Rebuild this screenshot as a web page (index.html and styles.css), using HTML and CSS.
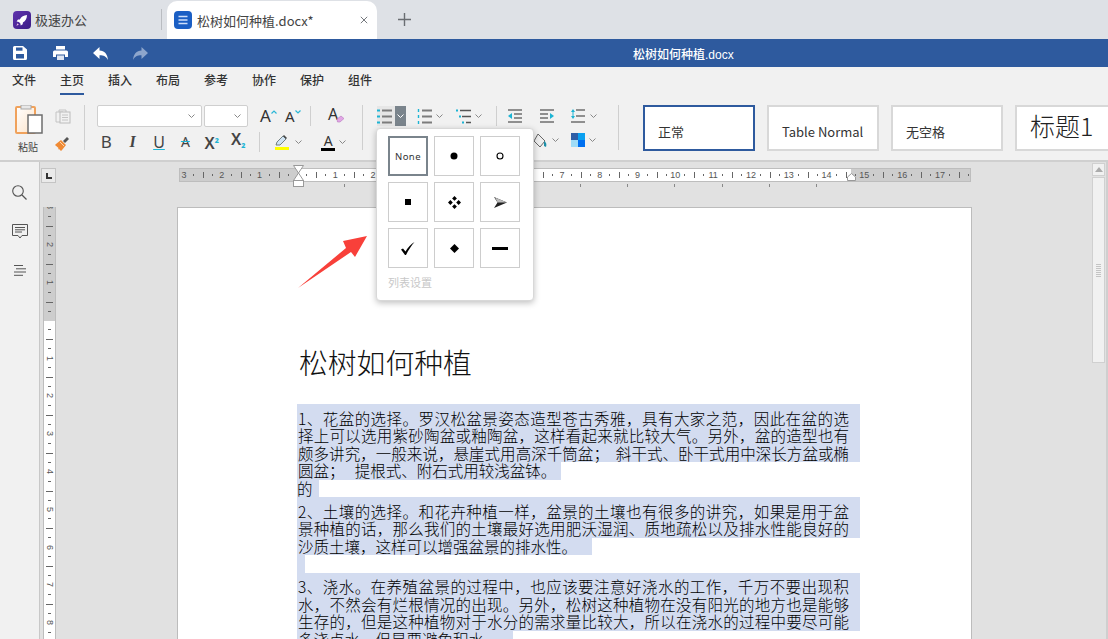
FILE: index.html
```html
<!DOCTYPE html>
<html lang="zh">
<head>
<meta charset="utf-8">
<title>松树如何种植.docx</title>
<link rel="stylesheet" href="styles.css">
</head>
<body>

<div class="tabs">
    <div class="tab">
        <svg class="tab-icon" viewBox="0 0 18 18"><defs><linearGradient id="pg" x1="0" y1="0" x2="1" y2="1"><stop offset="0" stop-color="#5f32ad"/><stop offset="1" stop-color="#3a1c86"/></linearGradient></defs><rect width="18" height="18" rx="4" fill="url(#pg)"/><path d="M14 4c-3.4.2-5.6 1.6-7.2 4.4L5 8.6 3.6 10.6l2.3.3 1.5 1.500.3 2.200 2-1.400.2-1.800C12.600 10 13.900 7.600 14 4z" fill="#fff"/><path d="M4.500 12.300 3.400 14.800 5.800 13.700z" fill="#f4c2e8"/></svg>
        <span>极速办公</span>
    </div>
    <div class="tab-sep"></div>
    <div class="tab active">
        <svg class="tab-icon" viewBox="0 0 18 18"><rect width="18" height="18" rx="4" fill="#1b5fc4"/><path d="M4.500 5.500h9M4.500 9h9M4.500 12.500h9" stroke="#cfe0fa" stroke-width="1.300"/></svg>
        <span class="tab-name">松树如何种植.docx*</span>
        <svg class="tab-close" viewBox="0 0 10 10"><path d="M1 1l8 8M9 1l-8 8" stroke="#6f7378" stroke-width="1.200"/></svg>
    </div>
    <svg class="tab-add" viewBox="0 0 13 13"><path d="M6.500 0v13M0 6.500h13" stroke="#6a6d72" stroke-width="1.400"/></svg>
</div>

<div class="titlebar">
    <div class="qa"><svg viewBox="0 0 14 14" width="14" height="14"><path d="M1.500 0H10l4 3.500v9a1.500 1.500 0 0 1-1.500 1.500h-11A1.500 1.500 0 0 1 0 12.500v-11A1.500 1.500 0 0 1 1.500 0z" fill="#fff"/><rect x="3" y="1.500" width="6.500" height="3.200" fill="#2e5a9e"/><rect x="3" y="8" width="8" height="4.500" fill="#2e5a9e"/></svg></div>
    <div class="qa"><svg viewBox="0 0 15 14" width="15" height="14"><rect x="3" y="0" width="9" height="3.500" fill="#fff"/><path d="M1.500 4.500h12A1.500 1.500 0 0 1 15 6v5h-3V8.500H3V11H0V6a1.500 1.500 0 0 1 1.500-1.500z" fill="#fff"/><rect x="4" y="9.500" width="7" height="4.500" fill="#dfe6f2"/></svg></div>
    <div class="qa"><svg viewBox="0 0 15 13" width="15" height="13"><path d="M6.500 0v3.500C11.500 3.800 14.500 7 15 13c-1.800-3.400-4.200-4.800-8.500-4.800V12L0 6z" fill="#fff"/></svg></div>
    <div class="qa"><svg viewBox="0 0 15 13" width="15" height="13"><path d="M8.500 0v3.500C3.500 3.800.5 7 0 13c1.800-3.400 4.200-4.800 8.500-4.800V12L15 6z" fill="#8ea6cc"/></svg></div>
    <div class="doc-title">松树如何种植.docx</div>
</div>

<div class="menu">
    <span>文件</span>
    <span class="current">主页</span>
    <span>插入</span>
    <span>布局</span>
    <span>参考</span>
    <span>协作</span>
    <span>保护</span>
    <span>组件</span>
</div>

<div class="ribbon">
    <div class="group clipboard">
        <div class="paste">
            <svg viewBox="0 0 28 29" width="28" height="29"><defs><linearGradient id="pf" x1="0" y1="0" x2="1" y2="1"><stop offset="0" stop-color="#fff"/><stop offset="1" stop-color="#fde3c8"/></linearGradient></defs><rect x="1" y="2" width="19" height="26" rx="1" fill="url(#pf)" stroke="#f0a25c" stroke-width="2"/><rect x="6" y="0" width="10" height="4" fill="#e8e8e8" stroke="#a8a8a8"/><rect x="13" y="10" width="14" height="18" fill="#fff" stroke="#6d6d6d" stroke-width="1.500"/></svg>
            <span>粘贴</span>
        </div>
        <div class="clip-tools">
            <svg viewBox="0 0 16 15" width="16" height="15"><path d="M4 3V1h7v2M1 3h7v10H1z" fill="none" stroke="#c4c4c4"/><rect x="5" y="3" width="10" height="11" fill="#f1f1f1" stroke="#bcbcbc"/><path d="M7 6h6M7 8.500h6M7 11h6" stroke="#c4c4c4"/></svg>
            <svg viewBox="0 0 15 15" width="15" height="15"><path d="M0 9l1-1 5-4 5 5-4 5-1 1-2-2-1 .5.5-1.500z" fill="#f08a34"/><path d="M5 6l4 4" stroke="#fbd3ae"/><path d="M8 5l4-4 2 2-4 4z" fill="#555"/></svg>
        </div>
    </div>
    <div class="sep tall"></div>

    <div class="group font">
        <div class="row">
            <div class="select font-name"><svg class="chev" viewBox="0 0 7 4"><path d="M.5.500 3.500 3.500 6.500.5" fill="none" stroke="#888"/></svg></div>
            <div class="select font-size"><svg class="chev" viewBox="0 0 7 4"><path d="M.5.500 3.500 3.500 6.500.5" fill="none" stroke="#888"/></svg></div>
            <div class="letter grow">A<svg viewBox="0 0 6 4" width="6" height="4"><path d="M.5 3.500 3 1l2.500 2.500" fill="none" stroke="#2bb7d6" stroke-width="1.200"/></svg></div>
            <div class="letter shrink">A<svg viewBox="0 0 6 4" width="6" height="4"><path d="M.5.500 3 3l2.500-2.500" fill="none" stroke="#2bb7d6" stroke-width="1.200"/></svg></div>
            <div class="sep short"></div>
            <svg class="eraser" viewBox="0 0 16 16" width="16" height="16"><text x="0" y="12" class="svg-a">A</text><path d="M9 11l4-3 3 2.500-4 3.500h-2.500z" fill="#e2a6e6" stroke="#b678bd" stroke-width=".6"/></svg>
        </div>
        <div class="row styles-row">
            <span class="fmt bold">B</span>
            <span class="fmt italic">I</span>
            <span class="fmt under">U</span>
            <span class="fmt strike">A</span>
            <span class="fmt sup">X<b>2</b></span>
            <span class="fmt sub">X<b>2</b></span>
            <div class="sep short second"></div>
            <div class="color-btn marker">
                <svg viewBox="0 0 14 11" width="14" height="11"><path d="M1 10l1-3 6-6 3 3-6 6z" fill="#cfe3f3" stroke="#566" stroke-width=".8"/><path d="M8 1l1-1 3 3-1 1z" fill="#444"/></svg>
                <i class="bar yellow"></i>
            </div>
            <svg class="chev free" viewBox="0 0 7 4"><path d="M.5.500 3.500 3.500 6.500.5" fill="none" stroke="#888"/></svg>
            <div class="color-btn fontcolor">
                <span>A</span>
                <i class="bar black"></i>
            </div>
            <svg class="chev free" viewBox="0 0 7 4"><path d="M.5.500 3.500 3.500 6.500.5" fill="none" stroke="#888"/></svg>
        </div>
    </div>
    <div class="sep tall"></div>

    <div class="group para">
        <div class="row">
            <div class="list-btn open">
                <svg viewBox="0 0 15 15" width="15" height="15"><path d="M0 1.500h3M0 7.500h3M0 13.500h3" stroke="#1cb4d4" stroke-width="2"/><path d="M5 1.500h10M5 7.500h10M5 13.500h10" stroke="#7c7c7c" stroke-width="2"/></svg>
                <span class="drop"><svg viewBox="0 0 7 4"><path d="M.5.500 3.500 3.500 6.500.5" fill="none" stroke="#fff"/></svg></span>
            </div>
            <div class="list-btn numbered">
                <svg viewBox="0 0 15 15" width="15" height="15"><path d="M1.500 0v3M1.500 6v3M1.500 12v3" stroke="#1cb4d4" stroke-width="1.400"/><path d="M5 1.500h10M5 7.500h10M5 13.500h10" stroke="#7c7c7c" stroke-width="2"/></svg>
                <svg class="chev free" viewBox="0 0 7 4"><path d="M.5.500 3.500 3.500 6.500.5" fill="none" stroke="#888"/></svg>
            </div>
            <div class="list-btn multi">
                <svg viewBox="0 0 15 15" width="15" height="15"><path d="M0 1.500h2M3 7.500h2M6 13.500h2" stroke="#1cb4d4" stroke-width="2"/><path d="M4 1.500h11M6 7.500h9M10 13.500h5" stroke="#555" stroke-width="1.500"/></svg>
                <svg class="chev free" viewBox="0 0 7 4"><path d="M.5.500 3.500 3.500 6.500.5" fill="none" stroke="#888"/></svg>
            </div>
            <div class="sep short"></div>
            <svg class="indent" viewBox="0 0 14 14" width="14" height="14"><path d="M0 1h14M6 5h8M6 9h8M0 13h14" stroke="#6f6f6f" stroke-width="1.400"/><path d="M4 4v6L0 7z" fill="#1cb4d4"/></svg>
            <svg class="indent second" viewBox="0 0 14 14" width="14" height="14"><path d="M0 1h14M0 5h8M0 9h8M0 13h14" stroke="#6f6f6f" stroke-width="1.400"/><path d="M10 4v6l4-3z" fill="#1cb4d4"/></svg>
            <svg class="spacing" viewBox="0 0 14 14" width="14" height="14"><path d="M5 1h9M5 7h9M0 13h14" stroke="#6f6f6f" stroke-width="1.400"/><path d="M2 0l2 3H0zM2 10l2-3H0z" fill="#1cb4d4"/><path d="M2 3v4" stroke="#1cb4d4"/></svg>
            <svg class="chev free" viewBox="0 0 7 4"><path d="M.5.500 3.500 3.500 6.500.5" fill="none" stroke="#888"/></svg>
        </div>
        <div class="row fill-row">
            <svg viewBox="0 0 15 15" width="15" height="15"><path d="M5 1l7 7-5 6-6-6z" fill="#eee" stroke="#666"/><path d="M11 8c2 1 3 3 2 6l-2-1z" fill="#1d8fa8"/></svg>
            <svg class="chev free" viewBox="0 0 7 4"><path d="M.5.500 3.500 3.500 6.500.5" fill="none" stroke="#888"/></svg>
            <svg class="shade" viewBox="0 0 14 14" width="14" height="14"><rect width="7" height="7" fill="#2f5ea6"/><rect x="7" width="7" height="7" fill="#0aa0f0"/><rect y="7" width="7" height="7" fill="#9fdcf7"/><rect x="7" y="7" width="7" height="7" fill="#0070f0"/></svg>
            <svg class="chev free" viewBox="0 0 7 4"><path d="M.5.500 3.500 3.500 6.500.5" fill="none" stroke="#888"/></svg>
        </div>
    </div>
    <div class="sep tall"></div>

    <div class="style-cards">
        <div class="style-card selected">正常</div>
        <div class="style-card">Table Normal</div>
        <div class="style-card">无空格</div>
        <div class="style-card heading">标题1</div>
    </div>
</div>

<div class="main">
    <div class="sidebar">
        <svg viewBox="0 0 15 15" width="15" height="15"><circle cx="6" cy="6" r="5.300" fill="none" stroke="#555" stroke-width="1.100"/><path d="M10 10l4.500 4.500" stroke="#555" stroke-width="1.200"/></svg>
        <svg viewBox="0 0 16 15" width="16" height="15"><path d="M.5.500h15v11H10l-2 2.500-2-2.500H.5z" fill="none" stroke="#555"/><path d="M3 3.500h10M3 5.800h10M3 8h7" stroke="#555"/></svg>
        <svg class="outline" viewBox="0 0 14 11" width="14" height="11"><path d="M1 .5h9M3 3.800h10M1 7h12M1 10.300h9" stroke="#555"/></svg>
    </div>
    <div class="workspace">
        <div class="canvas">
            <div class="ruler-row">
                <div class="corner"><i></i></div>
                <div class="ruler">
                    <span class="cm"><b>3</b></span><span class="cm"><b>2</b></span><span class="cm"><b>1</b></span><span class="cm"><b></b></span><span class="cm"><b>1</b></span><span class="cm"><b>2</b></span><span class="cm"><b>3</b></span><span class="cm"><b>4</b></span><span class="cm"><b>5</b></span><span class="cm"><b>6</b></span><span class="cm"><b>7</b></span><span class="cm"><b>8</b></span><span class="cm"><b>9</b></span><span class="cm"><b>10</b></span><span class="cm"><b>11</b></span><span class="cm"><b>12</b></span><span class="cm"><b>13</b></span><span class="cm"><b>14</b></span><span class="cm"><b>15</b></span><span class="cm"><b>16</b></span><span class="cm"><b>17</b></span>
                </div>
            </div>
            <div class="tabstops"></div>
            <div class="doc-row">
                <div class="vruler">
                    <span class="vcm"><b>3</b></span><span class="vcm"><b>2</b></span><span class="vcm"><b>1</b></span><span class="vcm"><b></b></span><span class="vcm"><b>1</b></span><span class="vcm"><b>2</b></span><span class="vcm"><b>3</b></span><span class="vcm"><b>4</b></span><span class="vcm"><b>5</b></span><span class="vcm"><b>6</b></span><span class="vcm"><b>7</b></span><span class="vcm"><b>8</b></span>
                </div>
                <div class="page">
                    <h1>松树如何种植</h1>
                    <div class="sel first w-full">1、花盆的选择。罗汉松盆景姿态造型苍古秀雅，具有大家之范，因此在盆的选</div>
                    <div class="sel w-full">择上可以选用紫砂陶盆或釉陶盆，这样看起来就比较大气。另外，盆的造型也有</div>
                    <div class="sel w-full">颇多讲究，一般来说，悬崖式用高深千筒盆；&nbsp;&nbsp;斜干式、卧干式用中深长方盆或椭</div>
                    <div class="sel w-short">圆盆；&nbsp;&nbsp;&nbsp;提根式、附石式用较浅盆钵。</div>
                    <div class="sel w-tiny">的</div>
                    <div class="sel first w-full">2、土壤的选择。和花卉种植一样，盆景的土壤也有很多的讲究，如果是用于盆</div>
                    <div class="sel w-full">景种植的话，那么我们的土壤最好选用肥沃湿润、质地疏松以及排水性能良好的</div>
                    <div class="sel w-mid">沙质土壤，这样可以增强盆景的排水性。</div>
                    <div class="sel w-blank">&nbsp;</div>
                    <div class="sel first w-full">3、浇水。在养殖盆景的过程中，也应该要注意好浇水的工作，千万不要出现积</div>
                    <div class="sel w-full">水，不然会有烂根情况的出现。另外，松树这种植物在没有阳光的地方也是能够</div>
                    <div class="sel w-full">生存的，但是这种植物对于水分的需求量比较大，所以在浇水的过程中要尽可能</div>
                    <div class="sel w-last">多浇点水，但是要避免积水。</div>
                </div>
            </div>
        </div>
        <div class="scrollbar">
            <div class="scroll-up"><svg viewBox="0 0 8 5" width="8" height="5"><path d="M4 0l4 5H0z" fill="#ababab"/></svg></div>
            <div class="scroll-thumb"><i></i></div>
        </div>
    </div>
</div>

<!-- ruler markers -->
<svg class="marker-left" viewBox="0 0 11 22" width="11" height="22"><path d="M.5.500h10L5.500 8zM5.500 8l5 7.500H.5z" fill="#fff" stroke="#999"/><rect x=".5" y="15.500" width="10" height="6" fill="#fff" stroke="#999"/></svg>
<svg class="marker-right" viewBox="0 0 9 8" width="9" height="8"><path d="M4.500.5l4 3.500v3.500h-8V4z" fill="#fff" stroke="#999"/></svg>

<!-- bullet dropdown -->
<div class="bullet-menu">
    <div class="bullet-grid">
        <div class="bullet none">None</div>
        <div class="bullet"><svg viewBox="0 0 8 8" width="8" height="8"><circle cx="4" cy="4" r="3.500"/></svg></div>
        <div class="bullet"><svg viewBox="0 0 8 8" width="8" height="8"><circle cx="4" cy="4" r="3" fill="none" stroke="#000" stroke-width="1.100"/></svg></div>
        <div class="bullet"><svg viewBox="0 0 6 6" width="6" height="6"><rect width="6" height="6"/></svg></div>
        <div class="bullet"><svg viewBox="0 0 13 13" width="13" height="13"><path d="M6.500 0l2.400 2.400-2.400 2.400-2.400-2.400zM6.500 8.200l2.400 2.400-2.400 2.400-2.400-2.400zM0 6.500l2.400-2.400 2.400 2.400-2.400 2.400zM8.200 6.500l2.400-2.400L13 6.500l-2.400 2.400z"/></svg></div>
        <div class="bullet"><svg viewBox="0 0 13 11" width="13" height="11"><path d="M0 0l13 5.500L0 11l3.500-5.500z" fill="#222"/><path d="M1 .6l12 4.900H3.500z" fill="#bbb"/></svg></div>
        <div class="bullet"><svg viewBox="0 0 14 13" width="14" height="13"><path d="M0 7.500l2-1 2.500 3C7 5.500 10 2 13.500 0 10.500 3.500 7.500 8 5 13H4z"/></svg></div>
        <div class="bullet"><svg viewBox="0 0 9 9" width="9" height="9"><path d="M4.500 0L9 4.500 4.500 9 0 4.500z"/></svg></div>
        <div class="bullet"><svg viewBox="0 0 16 3" width="16" height="3"><rect width="16" height="3"/></svg></div>
    </div>
    <div class="bullet-settings">列表设置</div>
</div>

<!-- annotation arrow -->
<svg class="red-arrow" viewBox="0 0 72 54" width="72" height="54"><path d="M1 53L49 13 46 6 70 1 58 22 54 17z" fill="#f8403a"/></svg>

</body>
</html>
```

FILE: styles.css
```css
* {
    margin: 0;
    padding: 0;
    box-sizing: border-box;
}

html, body {
    width: 1108px;
    height: 639px;
    overflow: hidden;
}

body {
    position: relative;
    display: flex;
    flex-direction: column;
    background: #f1f1f1;
    font-family: "Noto Sans CJK SC", "Noto Sans", sans-serif;
    color: #333;
}

svg {
    display: block;
    flex: none;
}

/* tab strip */
.tabs {
    height: 39px;
    flex: none;
    display: flex;
    align-items: center;
    padding-left: 13px;
    background: #dee1e6;
    font-size: 13px;
    color: #444;
}

.tab {
    display: flex;
    align-items: center;
    width: 148px;
}

.tab-icon {
    width: 18px;
    height: 18px;
    margin-right: 4px;
}

.tab-sep {
    width: 1px;
    height: 21px;
    background: #b9bcc1;
}

.tab.active {
    align-self: flex-end;
    width: 210px;
    height: 38px;
    margin-left: 5px;
    padding-left: 7px;
    background: #fff;
    border-radius: 10px 10px 0 0;
}

.tab.active .tab-icon {
    margin-right: 5px;
}

.tab-name {
    flex: 1;
}

.tab-close {
    width: 8px;
    height: 8px;
    margin-right: 9px;
}

.tab-add {
    width: 13px;
    height: 13px;
    margin-left: 21px;
}

/* title bar */
.titlebar {
    height: 28px;
    flex: none;
    display: flex;
    align-items: center;
    background: #2e5a9e;
}

.qa {
    width: 40px;
    display: flex;
    justify-content: center;
}

.doc-title {
    margin-left: 473px;
    font-family: "Liberation Sans", "Noto Sans CJK SC", sans-serif;
    font-size: 12px;
    font-weight: 500;
    color: #fff;
}

/* menu */
.menu {
    height: 28px;
    flex: none;
    display: flex;
    gap: 24px;
    padding-left: 12px;
    font-size: 12px;
    font-weight: 500;
    line-height: 26px;
    color: #333;
}

.menu .current {
    border-bottom: 2px solid #2e5a9e;
}

/* ribbon */
.ribbon {
    height: 67px;
    flex: none;
    display: flex;
    align-items: flex-start;
    padding-top: 10px;
    border-bottom: 2px solid #cfcfcf;
    overflow: hidden;
}

.sep {
    width: 1px;
    background: #cfcfcf;
    flex: none;
}

.sep.tall {
    height: 45px;
}

.sep.short {
    height: 20px;
}

.group {
    display: flex;
    flex: none;
}

.clipboard {
    width: 84px;
    padding-left: 15px;
}

.paste {
    width: 40px;
    display: flex;
    flex-direction: column;
    align-items: flex-start;
    font-size: 10px;
    color: #444;
}

.paste span {
    margin: 5px 0 0 3px;
}

.clip-tools {
    display: flex;
    flex-direction: column;
    gap: 12px;
    padding-top: 4px;
}

.font {
    width: 277px;
    flex-direction: column;
    padding-left: 12px;
}

.para {
    width: 255px;
    flex-direction: column;
    padding-left: 14px;
}

.row {
    display: flex;
    align-items: center;
    height: 22px;
}

.select {
    height: 22px;
    display: flex;
    align-items: center;
    justify-content: flex-end;
    padding-right: 6px;
    background: #fff;
    border: 1px solid #cfcfcf;
    border-radius: 2px;
}

.font-name {
    width: 105px;
    margin-right: 2px;
}

.font-size {
    width: 44px;
    margin-right: 12px;
}

.chev {
    width: 7px;
    height: 4px;
}

.letter {
    display: flex;
    align-items: flex-start;
    font-family: "Noto Sans", sans-serif;
    color: #333;
    line-height: 22px;
}

.letter svg {
    margin-top: 5px;
}

.letter.grow {
    font-size: 17px;
    width: 25px;
}

.letter.shrink {
    font-size: 15px;
    width: 25px;
}

.eraser {
    margin-left: 17px;
    overflow: visible;
}

.svg-a {
    font-family: "Noto Sans", sans-serif;
    font-size: 16px;
    fill: #333;
}

.styles-row {
    height: 24px;
    margin-top: 3px;
    margin-left: -4px;
}

.fmt {
    width: 26.400px;
    flex: none;
    text-align: center;
    font-family: "Noto Sans", sans-serif;
    font-size: 16px;
    line-height: 20px;
    color: #444;
}

.bold {
    font-size: 17px;
}

.italic {
    font-family: "Liberation Serif", serif;
    font-style: italic;
    font-weight: 700;
}

.under {
    text-decoration: underline;
    text-decoration-color: #1cb4d4;
    text-underline-offset: 1px;
}

.strike {
    font-size: 14px;
    text-decoration: line-through;
    text-decoration-color: #1cb4d4;
}

.sup b, .sub b {
    font-size: 7px;
    color: #1cb4d4;
}

.sup, .sub {
    font-weight: 600;
}

.sup b {
    vertical-align: 6px;
}

.sub b {
    vertical-align: -3px;
}

.sep.second {
    margin-left: 8px;
}

.color-btn {
    width: 14px;
    display: flex;
    flex-direction: column;
    align-items: center;
    flex: none;
    margin-left: 15px;
}

.color-btn span {
    font-family: "Noto Sans", sans-serif;
    font-size: 14px;
    line-height: 13px;
    color: #333;
}

.bar {
    display: block;
    width: 14px;
    height: 3px;
    margin-top: 1px;
}

.yellow {
    background: #ffff00;
}

.black {
    background: #000;
}

.marker + .chev {
    margin-left: 6px;
}

.fontcolor {
    margin-left: 19px;
}

.fontcolor + .chev {
    margin-left: 4px;
}

.list-btn {
    display: flex;
    align-items: center;
    height: 20px;
}

.list-btn.open {
    width: 29px;
    background: #e6e6e6;
}

.drop {
    width: 11px;
    height: 20px;
    margin-left: auto;
    display: flex;
    align-items: center;
    justify-content: center;
    background: #7a848c;
}

.drop svg {
    width: 7px;
    height: 4px;
}

.numbered {
    margin-left: 11px;
}

.numbered .chev, .multi .chev {
    margin-left: 4px;
}

.multi {
    margin-left: 13px;
}

.para .sep.short {
    margin-left: 14px;
}

.indent {
    margin-left: 11px;
}

.indent.second {
    margin-left: 18px;
}

.spacing {
    margin-left: 17px;
}

.spacing + .chev {
    margin-left: 5px;
}

.fill-row {
    height: 24px;
    margin-top: 1px;
    padding-left: 156px;
}

.fill-row .chev {
    margin-left: 4px;
}

.fill-row .shade {
    margin-left: 12px;
}

.style-cards {
    display: flex;
    gap: 12px;
    margin-left: 24px;
    flex: none;
}

.style-card {
    width: 112px;
    height: 46px;
    padding: 15px 0 0 13px;
    background: #fff;
    border: 2px solid #d8d8d8;
    font-size: 13px;
    line-height: 20px;
    color: #333;
}

.style-card.selected {
    border-color: #2e5a9e;
}

.style-card.heading {
    padding: 0 0 0 13px;
    font-size: 25px;
    font-weight: 300;
    line-height: 36px;
    color: #222;
}

/* main area */
.main {
    flex: 1;
    min-height: 0;
    display: flex;
}

.sidebar {
    width: 40px;
    flex: none;
    display: flex;
    flex-direction: column;
    align-items: center;
    gap: 24px;
    padding-top: 23px;
    border-right: 1px solid #c8c8c8;
    background: #f1f1f1;
}

.outline {
    margin-top: 2px;
}

.workspace {
    flex: 1;
    min-width: 0;
    display: flex;
    background: #e1e1e1;
}

.canvas {
    flex: 1;
    min-width: 0;
    display: flex;
    flex-direction: column;
}

.ruler-row {
    display: flex;
    padding: 6px 0 0 1px;
}

.corner {
    width: 15px;
    height: 15px;
    display: flex;
    align-items: center;
    justify-content: center;
    border: 1px solid #c4c4c4;
    background: #eaeaea;
}

.corner i {
    width: 6px;
    height: 6px;
    border-left: 2px solid #333;
    border-bottom: 2px solid #333;
}

.ruler {
    width: 792px;
    height: 14px;
    margin-left: 123px;
    padding-left: 4px;
    display: flex;
    overflow: hidden;
    border: 1px solid #bdbdbd;
    background: linear-gradient(to right, #cdcdcd 118px, #fff 118px, #fff 671px, #cdcdcd 671px);
}

.cm {
    flex: 0 0 37.8px;
    height: 12px;
    background:
        linear-gradient(#666, #666) 9px 5px / 1px 2px no-repeat,
        linear-gradient(#666, #666) 19px 3px / 1px 6px no-repeat,
        linear-gradient(#666, #666) 28px 5px / 1px 2px no-repeat;
}

.cm b {
    display: block;
    width: 16px;
    margin-left: -8px;
    text-align: center;
    font: 9px/12px "Liberation Sans", sans-serif;
    color: #555;
}

.tabstops {
    width: 473px;
    height: 3px;
    margin: 1px 0 0 304px;
    background: repeating-linear-gradient(to right, #888 0, #888 1px, transparent 1px, transparent 47.2px);
}

.doc-row {
    flex: 1;
    min-height: 0;
    display: flex;
    margin-top: 20px;
    overflow: hidden;
}

.vruler {
    width: 13px;
    margin-left: 3px;
    flex: none;
    border-left: 1px solid #bdbdbd;
    border-right: 1px solid #bdbdbd;
    background: linear-gradient(#cdcdcd 114px, #fff 114px);
}

.vcm {
    display: block;
    height: 37.8px;
    background:
        linear-gradient(#666, #666) 4px 9px / 3px 1px no-repeat,
        linear-gradient(#666, #666) 2px 19px / 7px 1px no-repeat,
        linear-gradient(#666, #666) 4px 28px / 3px 1px no-repeat;
}

.vcm b {
    display: block;
    height: 12px;
    transform: translateY(-6px);
    writing-mode: vertical-rl;
    font: 9px/11px "Liberation Sans", sans-serif;
    text-align: center;
    color: #555;
}

.page {
    width: 795px;
    margin-left: 121px;
    padding: 134px 0 0 119px;
    flex: none;
    background: #fff;
    border: 1px solid #bcbcbc;
    border-bottom: 0;
    font-size: 15.500px;
    font-weight: 300;
    color: #000;
}

.page h1 {
    height: 62px;
    padding-left: 2px;
    font-size: 28.800px;
    font-weight: 300;
    line-height: 40px;
    color: #111;
}

.sel {
    height: 17.500px;
    padding-left: 1px;
    line-height: 17.500px;
    background: #d3dcf0;
    white-space: nowrap;
}

.sel.first {
    height: 23px;
    padding-top: 5.500px;
}

.w-full {
    width: 563px;
    padding-right: 11px;
    text-align: justify;
    text-align-last: justify;
}

.w-short {
    width: 264px;
}

.w-tiny {
    width: 22px;
    padding-left: 0;
}

.w-mid {
    width: 295px;
}

.w-blank {
    width: 8px;
}

.w-last {
    width: 216px;
}

/* scrollbar */
.scrollbar {
    width: 16px;
    flex: none;
    padding-top: 1px;
    padding-right: 1px;
    display: flex;
    flex-direction: column;
    gap: 1px;
    border-right: 2px solid #cfcfcf;
}

.scroll-up {
    width: 13px;
    height: 13px;
    display: flex;
    align-items: center;
    justify-content: center;
    background: #f1f1f1;
    border: 1px solid #d0d0d0;
}

.scroll-thumb {
    width: 13px;
    height: 186px;
    display: flex;
    align-items: center;
    justify-content: center;
    background: #f1f1f1;
    border: 1px solid #d0d0d0;
}

.scroll-thumb i {
    width: 5px;
    height: 13px;
    background: repeating-linear-gradient(#c4c4c4 0, #c4c4c4 1px, transparent 1px, transparent 2px);
}

/* things lying over the window */
.marker-left {
    position: absolute;
    left: 293px;
    top: 165px;
}

.marker-right {
    position: absolute;
    left: 847px;
    top: 173px;
}

.bullet-menu {
    position: absolute;
    left: 376px;
    top: 128px;
    width: 158px;
    height: 173px;
    padding: 7px 0 0 11px;
    background: #fff;
    border: 1px solid #d8d8d8;
    border-radius: 4px;
    box-shadow: 0 2px 6px rgba(0, 0, 0, 0.25);
}

.bullet-grid {
    display: grid;
    grid-template-columns: repeat(3, 40px);
    grid-auto-rows: 40px;
    gap: 6px;
}

.bullet {
    display: flex;
    align-items: center;
    justify-content: center;
    border: 1px solid #cdcdcd;
}

.bullet.none {
    border: 2px solid #7a848c;
    font: 9.500px "Noto Sans", sans-serif;
    letter-spacing: 0.4px;
    color: #333;
}

.bullet-settings {
    margin-top: 7px;
    font-size: 11px;
    line-height: 15px;
    color: #c8c8c8;
}

.red-arrow {
    position: absolute;
    left: 297px;
    top: 235px;
}
```
